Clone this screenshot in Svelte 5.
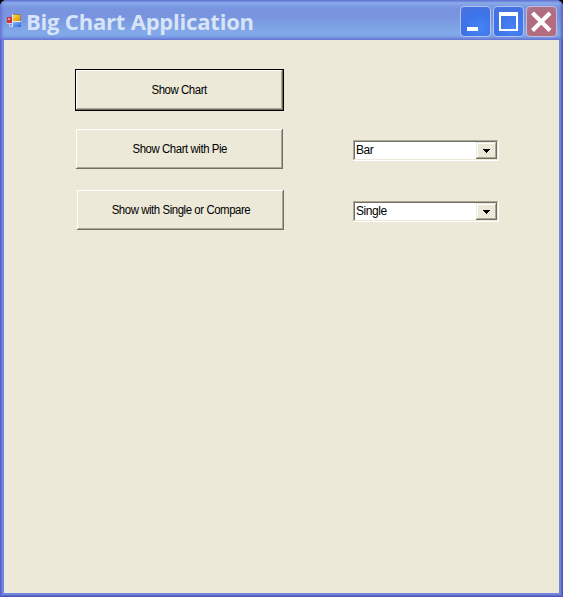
<script>
  const combos = ['Bar', 'Single'];
</script>

<div class="window">
  <header>
    <svg class="app" width="14" height="14" viewBox="0 0 14 14">
      <defs>
        <linearGradient id="gold" x2="1" y2="1"><stop stop-color="#ffdf70" /><stop offset=".5" stop-color="#eeb51c" /><stop offset="1" stop-color="#d09500" /></linearGradient>
        <linearGradient id="blue" x2="1" y2="1"><stop stop-color="#8abaff" /><stop offset="1" stop-color="#2566d8" /></linearGradient>
      </defs>
      <path d="M5 0H14V13H5Z" fill="#8d805f" />
      <path d="M5 0H6V13H5Z" fill="#e0e0e4" />
      <rect x="6" y="1" width="7" height="6" fill="url(#gold)" />
      <rect x="6" y="7" width="8" height="1" fill="#e5e8ef" />
      <rect x="6" y="8" width="8" height="5" fill="url(#blue)" />
      <rect x="0" y="3" width="5" height="6" fill="#cc3638" />
      <path d="M1 4H3V6H1Z" fill="#f29a92" />
      <path d="M0 9.500H5M2.500 10V12.500H5" stroke="#c7cce2" fill="none" />
    </svg>
    <h1>Big Chart Application</h1>
    <div class="controls">
      <button class="cap" aria-label="Minimize"><svg width="29" height="29"><path d="M6 20H17V24H6Z" fill="#fff" /></svg></button>
      <button class="cap" aria-label="Maximize"><svg width="29" height="29"><path d="M5 5H24V24H5ZM7 9V22H22V9Z" fill="#fff" fill-rule="evenodd" /></svg></button>
      <button class="cap close" aria-label="Close"><svg width="29" height="29"><path d="M5.500 6L23 23.500M23 6L5.500 23.500" stroke="#fff" stroke-width="4.200" /></svg></button>
    </div>
  </header>
  <main>
    <div class="buttons">
      <div class="default"><button class="push first"><span>Show Chart</span></button></div>
      <button class="push second"><span>Show Chart with Pie</span></button>
      <button class="push third"><span>Show with Single or Compare</span></button>
    </div>
    <div class="combos">
      {#each combos as value}
        <div class="combo">
          <span>{value}</span>
          <button class="drop" aria-label="Open list"><svg width="7" height="4"><path d="M0 0H7V1H6V2H5V3H4V4H3V3H2V2H1V1H0Z" shape-rendering="crispEdges" /></svg></button>
        </div>
      {/each}
    </div>
  </main>
</div>

<style>
  :global(body) { margin: 0; background: #000; overflow: hidden; }
  * { box-sizing: border-box; }
  button { margin: 0; padding: 0; border: 0; font: inherit; color: #000; }
  .window {
    width: 563px; height: 597px; overflow: hidden;
    border-radius: 7px 7px 0 0;
    background: #7285dc;
    box-shadow: inset 1px 0 #5a5fc8, inset -1px -1px #4f55b8, inset 2px 0 #6571d2, inset -2px -2px #5c68c8;
    padding: 0 4px 4px;
    font-family: "Liberation Sans", Arial, sans-serif;
  }
  header {
    display: flex; align-items: flex-start;
    height: 40px; margin: 0 -4px; padding-left: 7px;
    background: linear-gradient(#6182dc 0, #7693e2 1px, #8cace9 3px, #7f9fe4 5px, #7894e0 9px, #7a95df 18px, #7c9fe3 25px, #82a8e9 31px, #81a8e9 35px, #7895e0 38px, #7487dc 40px);
    box-shadow: inset 2px 0 3px #6673d4, inset -2px 0 3px #5862c8;
  }
  .app { margin-top: 14px; flex: none; }
  h1 {
    margin: 5px 0 0 5px; width: 300px; white-space: nowrap;
    font: bold 22px/32px "Open Sans", "Noto Sans", sans-serif;
    letter-spacing: -0.2px; color: #d8e4f8;
  }
  .controls { display: flex; gap: 2px; margin: 6px 0 0 auto; padding-right: 6px; }
  .cap {
    width: 31px; height: 31px; border: 1px solid #b0c2f1; border-radius: 4px;
    background: radial-gradient(circle at 65% 75%, #4684f5, #3e73e8 55%, #4c72dc);
  }
  .cap svg { display: block; }
  .close { background: radial-gradient(circle at 60% 65%, #b66b7a, #b06d80 60%, #ad7994); border-color: #c5b8df; }
  main {
    display: flex; height: 553px; background: #ece9d8;
    font-size: 12px;
  }
  .buttons { width: 349px; padding: 29px 0 0 71px; }
  .default { width: 209px; height: 42px; border: 1px solid #000; }
  .push {
    display: flex; align-items: center; justify-content: center;
    width: 207px; height: 40px; background: #ece9d8; white-space: nowrap;
    box-shadow: inset -1px -1px #716f64, inset 1px 1px #fff, inset -2px -2px #aca899;
  }
  .push span { letter-spacing: -0.45px; transform: scaleX(.95); }
  .second { margin: 18px 0 0 1px; }
  .third { margin: 21px 0 0 2px; }
  .combos { padding-top: 100px; display: flex; flex-direction: column; gap: 40px; }
  .combo {
    display: flex; align-items: center; justify-content: space-between;
    width: 146px; height: 21px; padding: 2px; background: #fff;
    box-shadow: inset -1px -1px #fff, inset 1px 1px #aca899, inset -2px -2px #ece9d8, inset 2px 2px #716f64;
  }
  .combo span { padding-left: 1px; letter-spacing: -0.45px; line-height: 17px; }
  .drop {
    display: flex; align-items: center; justify-content: center;
    width: 21px; height: 17px; background: #ece9d8;
    box-shadow: inset -1px -1px #716f64, inset 1px 1px #ece9d8, inset -2px -2px #aca899, inset 2px 2px #fff;
  }
</style>
